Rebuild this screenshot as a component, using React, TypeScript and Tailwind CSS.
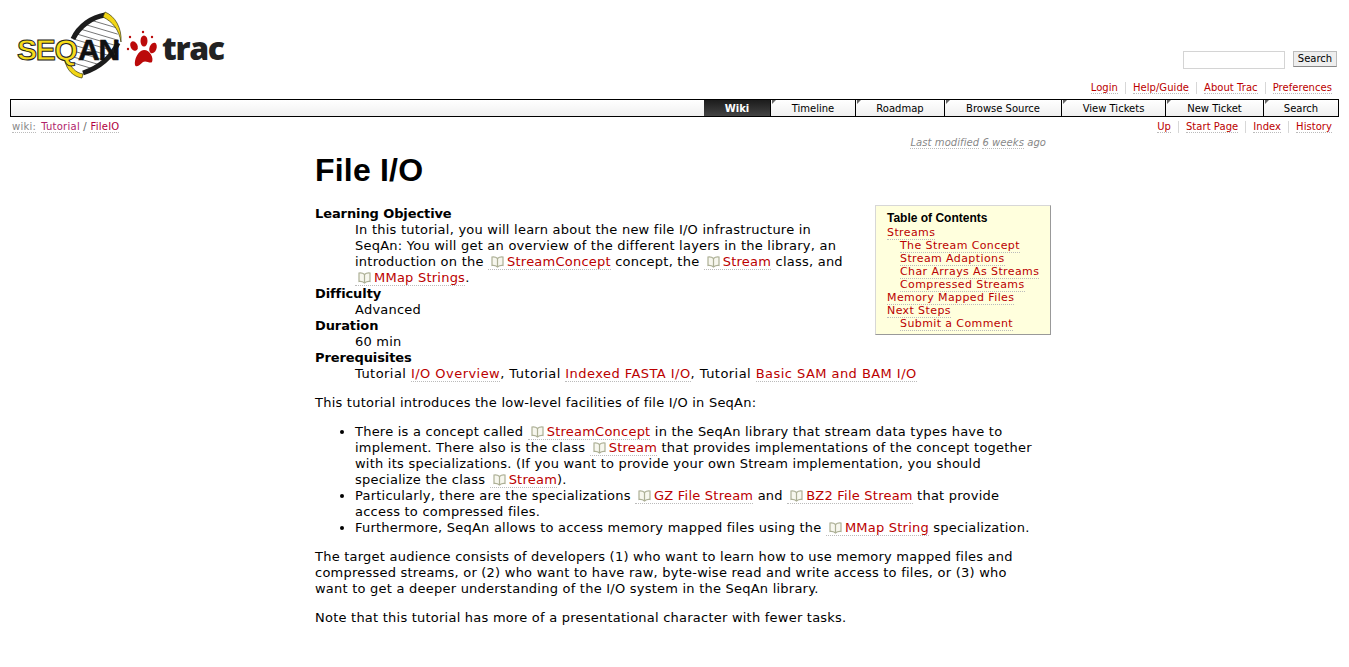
function Logo() {
  return (
    <svg width="212" height="72" viewBox="16 10 212 72" className="block">
      <defs>
        <clipPath id="lens">
          <path d="M73 40 C78 26 92 16 106 14 C116 22 119 34 118 42 C112 58 98 70 82 74 C74 66 70 52 73 40 Z" />
        </clipPath>
      </defs>
      {/* helix */}
      <g clipPath="url(#lens)" stroke="#666" strokeWidth="0.9">
        <path d="M70 14 L124 30 M70 20 L124 36 M70 26 L124 42 M70 32 L124 48 M70 38 L124 54 M70 44 L124 60 M70 50 L124 66 M70 56 L124 72 M70 62 L124 78" />
      </g>
      <path d="M73 39 C79 26 92 17 105 15" fill="none" stroke="#1c1c1c" strokeWidth="5" />
      <path d="M118 43 C111 58 98 68 83 73" fill="none" stroke="#1c1c1c" strokeWidth="5" />
      <path d="M105 12 C115 16 122 28 121 42 C119 30 113 22 103 17 Z" fill="#f2d616" stroke="#3a3a10" strokeWidth="0.7" />
      <path d="M68 59 C70 67 76 73 83 74 L82 78 C74 77 66 70 65 60 Z" fill="#f2d616" stroke="#3a3a10" strokeWidth="0.7" />
      <text x="17" y="60" fontFamily="Liberation Sans" fontWeight="700" fontSize="30" fill="#f6dc1a" stroke="#222" strokeWidth="1" letterSpacing="-1.2">SEQ</text>
      <text x="78" y="60" fontFamily="Liberation Sans" fontWeight="700" fontSize="30" fill="#111" stroke="#111" strokeWidth="0.6" letterSpacing="-1.2">AN</text>
      {/* paw */}
      <g fill="#bb0a0a">
        <path d="M144 50 C150 50 154 58 152 62 C150 64 146 60 143 62 C140 65 136 68 135 65 C134 60 138 50 144 50 Z" />
        <ellipse cx="134" cy="46" rx="3.5" ry="5" transform="rotate(-25 134 46)" />
        <ellipse cx="144" cy="41" rx="3.5" ry="5.5" />
        <ellipse cx="153" cy="48" rx="3.5" ry="5.5" transform="rotate(20 153 48)" />
        <circle cx="130" cy="37" r="1.2" />
        <circle cx="128" cy="49" r="1.2" />
        <circle cx="143" cy="32" r="1.2" />
        <circle cx="152" cy="37" r="1.2" />
      </g>
      <text x="162" y="60" fontFamily="Open Sans" fontWeight="800" fontSize="32" fill="#222" letterSpacing="-1.3">trac</text>
    </svg>
  )
}

function BookIcon() {
  return (
    <svg width="13" height="12" viewBox="0 0 13 12" className="inline-block align-[-2px] mr-[3px]">
      <path d="M6.5 2.5 C5 1 3 0.8 1 1 L1 9.5 C3 9.3 5 9.7 6.5 11 C8 9.7 10 9.3 12 9.5 L12 1 C10 0.8 8 1 6.5 2.5 Z M6.5 2.5 L6.5 11" fill="#f7f7ee" stroke="#adb096" strokeWidth="1.2" />
    </svg>
  )
}

function L({ children }: { children: React.ReactNode }) {
  return <a className="text-[#bb0000] border-b border-dotted border-[#bbbbbb]">{children}</a>
}

function W({ children }: { children: React.ReactNode }) {
  return (
    <a className="text-[#bb0000] border-b border-dotted border-[#bbbbbb] pl-[3px]">
      <BookIcon />
      {children}
    </a>
  )
}

function NavLinks({ items }: { items: string[] }) {
  return (
    <ul className="flex justify-end">
      {items.map((item, i) => (
        <li key={item} className={i === items.length - 1 ? 'pl-[7px]' : 'px-[7px] border-r border-[#d7d7d7]'}>
          <L>{item}</L>
        </li>
      ))}
    </ul>
  )
}

const tabs = [
  { label: 'Timeline', width: 'w-[85px]' },
  { label: 'Roadmap', width: 'w-[89px]' },
  { label: 'Browse Source', width: 'w-[117px]' },
  { label: 'View Tickets', width: 'w-[104px]' },
  { label: 'New Ticket', width: 'w-[98px]' },
  { label: 'Search', width: 'w-[75px]' },
]

const toc = [
  { label: 'Streams', sub: false },
  { label: 'The Stream Concept', sub: true },
  { label: 'Stream Adaptions', sub: true },
  { label: 'Char Arrays As Streams', sub: true },
  { label: 'Compressed Streams', sub: true },
  { label: 'Memory Mapped Files', sub: false },
  { label: 'Next Steps', sub: false },
  { label: 'Submit a Comment', sub: true },
]

export default function App() {
  return (
    <div className="bg-white text-black h-[667px] overflow-hidden font-['DejaVu_Sans',sans-serif] text-[13px] leading-[16px]">
      {/* header */}
      <div className="flex justify-between h-[82px]">
        <div className="pl-[16px] pt-[10px]">
          <Logo />
        </div>
        <div className="flex gap-[8px] pt-[51px] pr-[12px] items-start">
          <input className="w-[102px] h-[18px] border border-[#d4d4d4] bg-white" />
          <button className="w-[44px] h-[16px] bg-[#eeeeee] border border-[#bbbbbb] border-b-[#888888] text-[10px] leading-[14px] text-black">Search</button>
        </div>
      </div>

      <div className="h-[12px] pr-[17px] text-[10px] leading-[12px] mb-[5px] tracking-[0.05px]">
        <NavLinks items={['Login', 'Help/Guide', 'About Trac', 'Preferences']} />
      </div>

      {/* main nav */}
      <div className="mx-[10px] h-[18px] border border-black flex justify-end bg-gradient-to-b from-white to-[#f0f0f0] text-[10px] leading-[17px]">
        <div className="w-[66px] text-center font-bold text-white bg-gradient-to-b from-[#1c1c1c] to-[#444444]">Wiki</div>
        {tabs.map((t) => (
          <div key={t.label} className={`${t.width} relative text-center border-l border-black`}>
            <span className="absolute left-[1px] top-0 w-0 h-0 border-t-[4px] border-r-[4px] border-t-[#666666] border-r-transparent" />
            {t.label}
          </div>
        ))}
      </div>

      {/* context nav */}
      <div className="flex justify-between pl-[12px] pr-[17px] pt-[4px] text-[10px] leading-[12px] tracking-[0.05px]">
        <div className="text-[#888888] tracking-[0.25px]">
          <span className="border-b border-dotted border-[#bbbbbb]">wiki:</span>
          <a className="ml-[5px] text-[#b0226a] border-b border-dotted border-[#bbbbbb]">Tutorial</a>
          <span className="text-[#666666]"> / </span>
          <a className="text-[#b00040] border-b border-dotted border-[#bbbbbb]">FileIO</a>
        </div>
        <NavLinks items={['Up', 'Start Page', 'Index', 'History']} />
      </div>

      {/* content */}
      <div className="ml-[315px] w-[736px]">
        <p className="text-right text-[10px] leading-[12px] italic text-[#888888] pr-[5px] mt-[4px] tracking-[0.07px]">
          <span className="border-b border-dotted border-[#bbbbbb]">Last modified</span>{' '}
          <span className="border-b border-dotted border-[#bbbbbb]">6 weeks</span> ago
        </p>

        <h1 className="font-['Liberation_Sans',sans-serif] font-bold text-[32px] leading-[37px] mt-[3px] mb-[17px] tracking-[0.2px]">File I/O</h1>

        <div className="float-right -mt-[1px] w-[176px] h-[130px] ml-[24px] bg-[#ffffdd] border border-[#d7d7d7] border-b-[#999999] border-r-[#999999] pl-[11px] pt-[5px] text-[11px] leading-[13px] tracking-[0.4px]">
          <h4 className="font-['Liberation_Sans',sans-serif] font-bold text-[12px] leading-[14px] mb-[1px] tracking-normal">Table of Contents</h4>
          {toc.map((t) => (
            <div key={t.label} className={t.sub ? 'pl-[13px]' : ''}>
              <L>{t.label}</L>
            </div>
          ))}
        </div>

        <div className="tracking-[0.23px] pr-[16px]">
          <div className="font-bold tracking-[-0.1px]">Learning Objective</div>
          <div className="pl-[40px]">
            In this tutorial, you will learn about the new file I/O infrastructure in SeqAn: You will get an overview of the different layers in the library, an introduction on the <W>StreamConcept</W> concept, the <W>Stream</W> class, and <W>MMap Strings</W>.
          </div>
          <div className="font-bold tracking-[-0.1px]">Difficulty</div>
          <div className="pl-[40px]">Advanced</div>
          <div className="font-bold tracking-[-0.1px]">Duration</div>
          <div className="pl-[40px]">60 min</div>
          <div className="font-bold tracking-[-0.1px]">Prerequisites</div>
          <div className="pl-[40px] tracking-[0.45px]">
            Tutorial <L>I/O Overview</L>, Tutorial <L>Indexed FASTA I/O</L>, Tutorial <L>Basic SAM and BAM I/O</L>
          </div>

          <p className="mt-[13px]">This tutorial introduces the low-level facilities of file I/O in SeqAn:</p>

          <ul className="list-disc pl-[40px] mt-[13px]">
            <li>
              There is a concept called <W>StreamConcept</W> in the SeqAn library that stream data types have to implement. There also is the class <W>Stream</W> that provides implementations of the concept together with its specializations. (If you want to provide your own Stream implementation, you should specialize the class <W>Stream</W>).
            </li>
            <li>
              Particularly, there are the specializations <W>GZ File Stream</W> and <W>BZ2 File Stream</W> that provide access to compressed files.
            </li>
            <li>
              Furthermore, SeqAn allows to access memory mapped files using the <W>MMap String</W> specialization.
            </li>
          </ul>

          <p className="mt-[13px]">
            The target audience consists of developers (1) who want to learn how to use memory mapped files and compressed streams, or (2) who want to have raw, byte-wise read and write access to files, or (3) who want to get a deeper understanding of the I/O system in the SeqAn library.
          </p>
          <p className="mt-[13px]">Note that this tutorial has more of a presentational character with fewer tasks.</p>
        </div>
      </div>
    </div>
  )
}
